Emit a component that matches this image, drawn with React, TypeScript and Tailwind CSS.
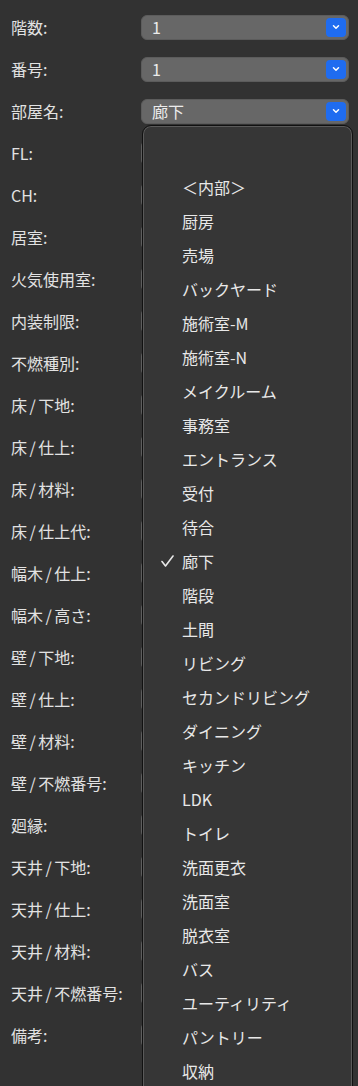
import React from 'react';

const labels = [
    '階数:', '番号:', '部屋名:', 'FL:', 'CH:', '居室:', '火気使用室:', '内装制限:', '不燃種別:',
    '床/下地:', '床/仕上:', '床/材料:', '床/仕上代:', '幅木/仕上:', '幅木/高さ:',
    '壁/下地:', '壁/仕上:', '壁/材料:', '壁/不燃番号:', '廻縁:',
    '天井/下地:', '天井/仕上:', '天井/材料:', '天井/不燃番号:', '備考:',
];

const selectValues: Record<number, string> = { 0: '1', 1: '1', 2: '廊下' };

const rooms = [
    '＜内部＞', '厨房', '売場', 'バックヤード', '施術室-M', '施術室-N', 'メイクルーム', '事務室',
    'エントランス', '受付', '待合', '廊下', '階段', '土間', 'リビング', 'セカンドリビング',
    'ダイニング', 'キッチン', 'LDK', 'トイレ', '洗面更衣', '洗面室', '脱衣室', 'バス',
    'ユーティリティ', 'パントリー', '収納',
];

const SelectBox: React.FC<{ value: string }> = ({ value }) => (
    <div className="flex items-center w-[208px] h-[25px] rounded-[6px] bg-[#676767] border border-[#5c5c5c] pl-[10px] pr-[2px]">
        <span className="flex-1 text-[16px] text-[#ececec] leading-none">{value}</span>
        <span className="flex items-center justify-center w-[20px] h-[19px] rounded-[4px] bg-[#1f6cf0]">
            <svg width="8" height="6" viewBox="0 0 8 6" fill="none">
                <path d="M1.5 1.8 L4 4.2 L6.5 1.8" stroke="white" strokeWidth="1.5" strokeLinecap="round" strokeLinejoin="round" />
            </svg>
        </span>
    </div>
);

// the slash in these labels sits with a little air on both sides
const Label: React.FC<{ text: string }> = ({ text }) => {
    const parts = text.split('/');
    return (
        <div className="w-[141px] pl-[11px] text-[16px] text-[#e2e2e2] whitespace-nowrap">
            {parts.map((p, i) => (
                <React.Fragment key={i}>
                    {i > 0 && <span className="px-[2.5px]">/</span>}
                    {p}
                </React.Fragment>
            ))}
        </div>
    );
};

export default function App() {
    return (
        <div
            className="relative w-full h-[1086px] overflow-hidden bg-[#323232] pt-[6px]"
            style={{ fontFamily: '"Noto Sans CJK JP", "Noto Sans", sans-serif' }}
        >
            {labels.map((label, i) => (
                <div key={label} className="flex items-center h-[42px]">
                    <Label text={label} />
                    {selectValues[i] !== undefined ? (
                        <SelectBox value={selectValues[i]} />
                    ) : (
                        <div className="w-[208px] h-[24px] rounded-[5px] bg-[#5e5e5e]" />
                    )}
                </div>
            ))}

            {/* open popup menu for 部屋名 */}
            <div className="absolute left-[142px] top-[125px] w-[211px] h-[1000px] rounded-[9px] border border-[#111] bg-[#363636] shadow-[inset_0_0_0_1px_#5a5a5a] pt-[44px]">
                {rooms.map(room => (
                    <div key={room} className="flex items-center h-[34px] text-[16px] text-[#e8e8e8]">
                        <span className="w-[39px] flex justify-end pr-[8px]">
                            {room === '廊下' && (
                                <svg width="13" height="12" viewBox="0 0 13 12" fill="none">
                                    <path d="M1 6.5 L4.5 11 L12 1" stroke="#e8e8e8" strokeWidth="1.6" strokeLinecap="round" strokeLinejoin="round" />
                                </svg>
                            )}
                        </span>
                        <span>{room}</span>
                    </div>
                ))}
            </div>
        </div>
    );
}
